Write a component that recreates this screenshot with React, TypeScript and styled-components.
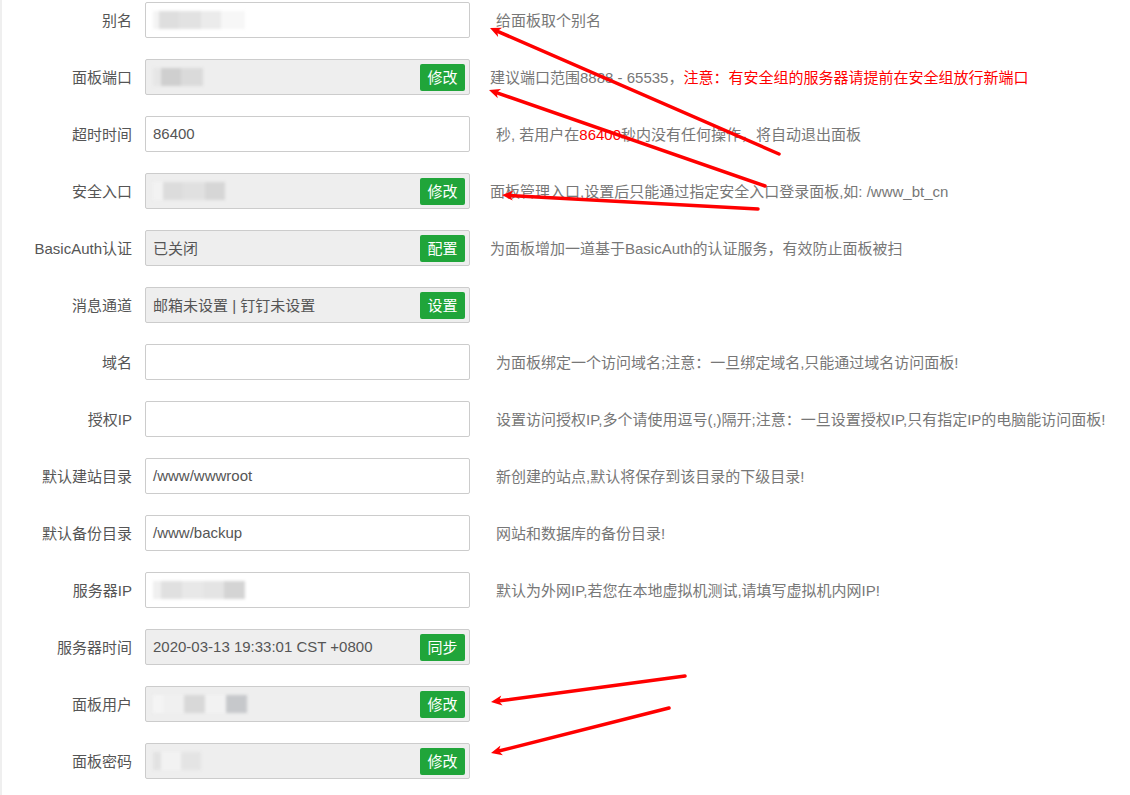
import React from "react";
import styled, { createGlobalStyle } from "styled-components";

const Global = createGlobalStyle`
  html, body { margin: 0; padding: 0; background: #fff; }
  body { font-family: "Liberation Sans", "Noto Sans CJK SC", sans-serif; }
`;

const Page = styled.div`
  position: relative;
  width: 1130px;
  height: 795px;
  box-sizing: border-box;
  border-left: 2px solid #efefef;
  padding-top: 2px;
  overflow: hidden;
  display: flex;
  flex-direction: column;
  gap: 21px;
`;

const Row = styled.div`
  display: flex;
  align-items: center;
  height: 36px;
`;

const Label = styled.div`
  width: 130px;
  flex: none;
  text-align: right;
  font-size: 15px;
  color: #555;
  padding-right: 13px;
  padding-bottom: 2px;
  white-space: nowrap;
`;

const Field = styled.div<{ $readonly?: boolean }>`
  box-sizing: border-box;
  width: 325px;
  height: 36px;
  flex: none;
  border: 1px solid #ccc;
  border-radius: 2px;
  background: ${(p) => (p.$readonly ? "#eee" : "#fff")};
  display: flex;
  align-items: center;
  padding: 0 4px 0 7px;
  font-size: 15px;
  color: #555;
  white-space: nowrap;
`;

const FieldText = styled.span`
  flex: 1;
  padding-bottom: 2px;
`;

const GreenButton = styled.button`
  flex: none;
  width: 45px;
  height: 27px;
  border: none;
  border-radius: 2px;
  background: #20a53a;
  color: #fff;
  font-family: "Noto Sans CJK SC", sans-serif;
  font-size: 15px;
  padding: 0 0 2px;
  line-height: 25px;
`;

const Desc = styled.div<{ $group?: boolean }>`
  margin-left: ${(p) => (p.$group ? "20px" : "26px")};
  font-size: 15px;
  color: #777;
  padding-bottom: 2px;
  white-space: nowrap;
`;

const Red = styled.span`
  color: #ff0000;
`;

const Redact = styled.span`
  flex: 1;
  display: flex;
  align-items: center;
  height: 20px;
  filter: blur(1.4px);
`;

const Patch = styled.span<{ $w: number; $c: string; $h?: number }>`
  display: inline-block;
  width: ${(p) => p.$w}px;
  height: ${(p) => p.$h ?? 18}px;
  background: ${(p) => p.$c};
`;

const Overlay = styled.svg`
  position: absolute;
  left: 0;
  top: 0;
  pointer-events: none;
`;

type Block = [number, string, number?];
type RowDef = {
  label: string;
  value?: React.ReactNode;
  blocks?: Block[];
  button?: string;
  readonly?: boolean;
  desc?: React.ReactNode;
};

const rows: RowDef[] = [
  {
    label: "别名",
    blocks: [[6, "#f4f4f4"], [20, "#dedede"], [22, "#e2e2e2"], [20, "#ebebeb"], [24, "#f7f7f7"]],
    desc: "给面板取个别名",
  },
  {
    label: "面板端口",
    readonly: true,
    blocks: [[8, "#e6e6e6"], [20, "#cfcfcf"], [22, "#dadada"]],
    button: "修改",
    desc: (
      <>
        建议端口范围8888 - 65535，<Red>注意：有安全组的服务器请提前在安全组放行新端口</Red>
      </>
    ),
  },
  {
    label: "超时时间",
    value: "86400",
    desc: (
      <>
        秒, 若用户在<Red>86400</Red>秒内没有任何操作，将自动退出面板
      </>
    ),
  },
  {
    label: "安全入口",
    readonly: true,
    blocks: [[10, "#f2f2f2"], [20, "#dcdcdc"], [22, "#e0e0e0"], [20, "#d6d6d6"]],
    button: "修改",
    desc: "面板管理入口,设置后只能通过指定安全入口登录面板,如: /www_bt_cn",
  },
  {
    label: "BasicAuth认证",
    readonly: true,
    value: "已关闭",
    button: "配置",
    desc: "为面板增加一道基于BasicAuth的认证服务，有效防止面板被扫",
  },
  {
    label: "消息通道",
    readonly: true,
    value: "邮箱未设置 | 钉钉未设置",
    button: "设置",
  },
  {
    label: "域名",
    desc: "为面板绑定一个访问域名;注意：一旦绑定域名,只能通过域名访问面板!",
  },
  {
    label: "授权IP",
    desc: "设置访问授权IP,多个请使用逗号(,)隔开;注意：一旦设置授权IP,只有指定IP的电脑能访问面板!",
  },
  {
    label: "默认建站目录",
    value: "/www/wwwroot",
    desc: "新创建的站点,默认将保存到该目录的下级目录!",
  },
  {
    label: "默认备份目录",
    value: "/www/backup",
    desc: "网站和数据库的备份目录!",
  },
  {
    label: "服务器IP",
    blocks: [[8, "#f0f0f0"], [21, "#e0e0e0"], [21, "#e8e8e8"], [21, "#e4e4e4"], [21, "#d4d4d4"]],
    desc: "默认为外网IP,若您在本地虚拟机测试,请填写虚拟机内网IP!",
  },
  {
    label: "服务器时间",
    readonly: true,
    value: "2020-03-13 19:33:01 CST +0800",
    button: "同步",
  },
  {
    label: "面板用户",
    readonly: true,
    blocks: [[10, "#f4f4f4"], [21, "#f0f0f0"], [21, "#d8d8d8"], [21, "#f2f2f2"], [21, "#c6c8cb"]],
    button: "修改",
  },
  {
    label: "面板密码",
    readonly: true,
    blocks: [[8, "#e2e2e2"], [20, "#f2f2f2"], [20, "#e4e4e4"]],
    button: "修改",
  },
];

type Arrow = { x1: number; y1: number; x2: number; y2: number };
const arrows: Arrow[] = [
  { x1: 777, y1: 154, x2: 488, y2: 28 },
  { x1: 763, y1: 186, x2: 487, y2: 90 },
  { x1: 756, y1: 209, x2: 500, y2: 195 },
  { x1: 683, y1: 676, x2: 489, y2: 702 },
  { x1: 667, y1: 708, x2: 489, y2: 753 },
];

function ArrowShape({ a }: { a: Arrow }) {
  const dx = a.x2 - a.x1;
  const dy = a.y2 - a.y1;
  const len = Math.hypot(dx, dy);
  const ux = dx / len;
  const uy = dy / len;
  const px = -uy;
  const py = ux;
  const headLen = 11;
  const headW = 5;
  const bx = a.x2 - ux * headLen;
  const by = a.y2 - uy * headLen;
  const pts = `${a.x2},${a.y2} ${bx + px * headW},${by + py * headW} ${bx + ux * 3},${by + uy * 3} ${bx - px * headW},${by - py * headW}`;
  return (
    <g>
      <line
        x1={a.x1}
        y1={a.y1}
        x2={bx + ux * 4}
        y2={by + uy * 4}
        stroke="#ff0000"
        strokeWidth={3.5}
        strokeLinecap="round"
      />
      <polygon points={pts} fill="#ff0000" />
    </g>
  );
}

export default function App() {
  return (
    <>
      <Global />
      <Page>
        {rows.map((r) => (
          <Row key={r.label}>
            <Label>{r.label}</Label>
            <Field $readonly={r.readonly}>
              {r.blocks ? (
                <Redact>
                  {r.blocks.map(([w, c, h], i) => (
                    <Patch key={i} $w={w} $c={c} $h={h} />
                  ))}
                </Redact>
              ) : (
                <FieldText>{r.value}</FieldText>
              )}
              {r.button && <GreenButton>{r.button}</GreenButton>}
            </Field>
            {r.desc && <Desc $group={!!r.button}>{r.desc}</Desc>}
          </Row>
        ))}
        <Overlay width={1130} height={795} viewBox="0 0 1130 795">
          {arrows.map((a, i) => (
            <ArrowShape key={i} a={a} />
          ))}
        </Overlay>
      </Page>
    </>
  );
}
